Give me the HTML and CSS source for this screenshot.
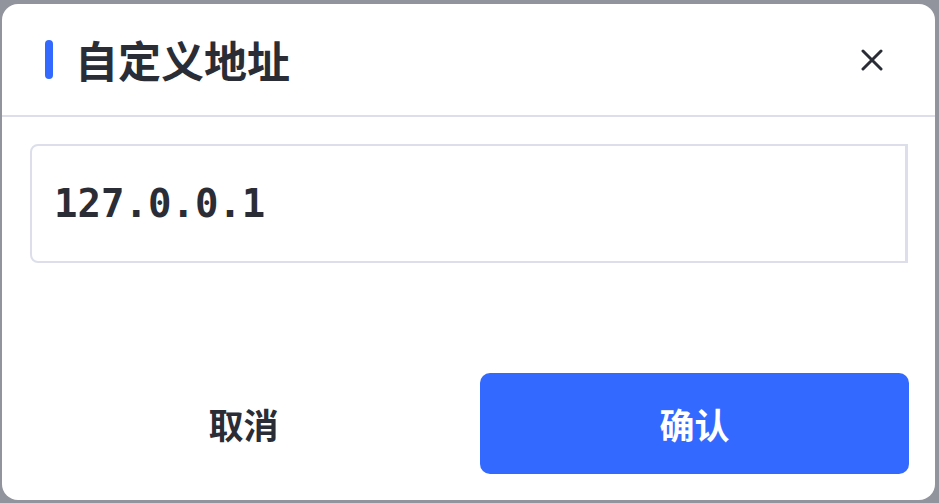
FILE: index.html
```html
<!DOCTYPE html>
<html lang="zh-CN">
<head>
<meta charset="utf-8">
<title>自定义地址</title>
<link rel="stylesheet" href="styles.css">
</head>
<body>
<div class="dialog">
  <div class="header">
    <div class="title"><span class="bar"></span><span class="title-text">自定义地址</span></div>
    <button class="close" aria-label="关闭">
      <svg width="22" height="22" viewBox="0 0 22 22"><path d="M2 2 L20 20 M20 2 L2 20" stroke="#2b2d36" stroke-width="3" stroke-linecap="round" fill="none"/></svg>
    </button>
  </div>
  <div class="body">
    <div class="input"><span class="value">127.0.0.1</span></div>
  </div>
  <div class="footer">
    <button class="btn btn-cancel">取消</button>
    <button class="btn btn-ok">确认</button>
  </div>
</div>
</body>
</html>
```
FILE: styles.css
```css
html, body {
  margin: 0;
  padding: 0;
}
body {
  background: #91949c;
  width: 939px;
  height: 503px;
  overflow: hidden;
  font-family: "Noto Sans CJK SC", "Noto Sans", sans-serif;
  color: #2b2d36;
}
.dialog {
  box-sizing: border-box;
  margin: 4px 0 0 2px;
  width: 933px;
  height: 496px;
  background: #ffffff;
  border-radius: 16px;
  display: flex;
  flex-direction: column;
}
.header {
  box-sizing: border-box;
  height: 113px;
  border-bottom: 2px solid #dcdfe9;
  display: flex;
  align-items: center;
  justify-content: space-between;
  padding: 0 41px 0 43px;
}
.title {
  display: flex;
  align-items: center;
  gap: 22px;
}
.bar {
  width: 8px;
  height: 39px;
  border-radius: 4px;
  background: #3369ff;
}
.title-text {
  font-size: 43px;
  font-weight: 700;
  line-height: 1;
}
.close {
  width: 44px;
  height: 44px;
  padding: 0;
  border: 0;
  background: transparent;
  display: flex;
  align-items: center;
  justify-content: center;
}
.body {
  padding: 27px 27px 0 28px;
}
.input {
  box-sizing: border-box;
  height: 119px;
  border: 2px solid #dcdfe9;
  border-right-width: 3px;
  border-radius: 8px 0 0 8px;
  display: flex;
  align-items: center;
  padding-left: 22px;
}
.value {
  font-family: "DejaVu Sans Mono", monospace;
  font-size: 39px;
  font-weight: 700;
  color: #2b2d36;
}
.footer {
  margin-top: auto;
  display: grid;
  grid-template-columns: 427px 429px;
  gap: 23px;
  padding: 0 26px 26px 28px;
}
.btn {
  height: 101px;
  border: 0;
  border-radius: 10px;
  font-family: "Noto Sans CJK SC", sans-serif;
  font-size: 35px;
  font-weight: 700;
  padding: 0;
}
.btn-cancel {
  background: transparent;
  color: #2b2d36;
}
.btn-ok {
  background: #3369ff;
  color: #ffffff;
}
```
